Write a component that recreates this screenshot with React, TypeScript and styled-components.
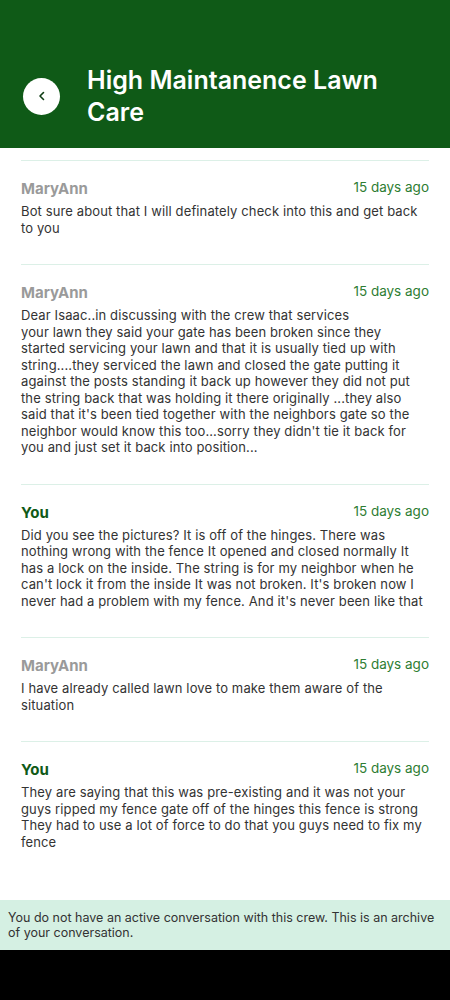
import React from "react";
import styled, { createGlobalStyle } from "styled-components";

interface Message {
  id: number;
  author: string;
  mine: boolean;
  time: string;
  text: string;
}

const messages: Message[] = [
  {
    id: 1,
    author: "MaryAnn",
    mine: false,
    time: "15 days ago",
    text: "Bot sure about that I will definately check into this and get back to you",
  },
  {
    id: 2,
    author: "MaryAnn",
    mine: false,
    time: "15 days ago",
    text: "Dear Isaac..in discussing with the crew that services\nyour lawn they said your gate has been broken since they started servicing your lawn and that it is usually tied up with string....they serviced the lawn and closed the gate putting it against the posts standing it back up however they did not put the string back that was holding it there originally ...they also said that it's been tied together with the neighbors gate so the neighbor would know this too...sorry they didn't tie it back for you and just set it back into position...",
  },
  {
    id: 3,
    author: "You",
    mine: true,
    time: "15 days ago",
    text: "Did you see the pictures? It is off of the hinges. There was nothing wrong with the fence It opened and closed normally It has a lock on the inside. The string is for my neighbor when he can't lock it from the inside It was not broken. It's broken now I never had a problem with my fence. And it's never been like that",
  },
  {
    id: 4,
    author: "MaryAnn",
    mine: false,
    time: "15 days ago",
    text: "I have already called lawn love to make them aware of the situation",
  },
  {
    id: 5,
    author: "You",
    mine: true,
    time: "15 days ago",
    text: "They are saying that this was pre-existing and it was not your guys ripped my fence gate off of the hinges this fence is strong They had to use a lot of force to do that you guys need to fix my fence",
  },
];

const GlobalStyle = createGlobalStyle`
  body {
    margin: 0;
    background: #ffffff;
    font-family: Inter, "Noto Sans", sans-serif;
  }
`;

const Page = styled.div`
  width: 450px;
  height: 1000px;
  display: flex;
  flex-direction: column;
  overflow: hidden;
`;

const Header = styled.header`
  height: 148px;
  box-sizing: border-box;
  padding: 44px 20px 0 23px;
  background: #0f5a17;
  display: flex;
  align-items: center;
  gap: 27px;
`;

const BackButton = styled.button`
  width: 37px;
  height: 37px;
  flex-shrink: 0;
  border-radius: 50%;
  border: none;
  background: #ffffff;
  display: flex;
  align-items: center;
  justify-content: center;
  padding: 0;
  cursor: pointer;
`;

const Title = styled.h1`
  margin: 0;
  color: #ffffff;
  font-size: 25px;
  font-weight: 600;
  line-height: 32px;
`;

const Feed = styled.div`
  flex: 1;
  padding: 12px 21px 0;
`;

const Item = styled.div`
  border-top: 1px solid #dcf0e7;
  padding: 18px 0 28px;
`;

const Meta = styled.div`
  display: flex;
  justify-content: space-between;
  align-items: flex-start;
`;

const Author = styled.span<{ $mine: boolean }>`
  font-size: 15px;
  line-height: 20px;
  font-weight: 700;
  color: ${(p) => (p.$mine ? "#0f5a17" : "#9a9a9a")};
`;

const Time = styled.span`
  font-size: 13.5px;
  line-height: 16px;
  color: #2e7d32;
`;

const Body = styled.p`
  margin: 4px 0 0;
  font-size: 13px;
  line-height: 16.5px;
  color: #333333;
  letter-spacing: 0.12px;
  white-space: pre-line;
`;

const Banner = styled.div`
  background: #d5f0e3;
  padding: 10px 6px 10px 8px;
  font-size: 12.5px;
  line-height: 15px;
  color: #333333;
`;

const NavBar = styled.div`
  height: 50px;
  flex-shrink: 0;
  background: #000000;
`;

export default function App() {
  return (
    <Page>
      <GlobalStyle />
      <Header>
        <BackButton aria-label="Back">
          <svg width="10" height="10" viewBox="0 0 10 10" fill="none">
            <path
              d="M6.5 1.5 L3 5 L6.5 8.5"
              stroke="#0f3d14"
              strokeWidth="1.6"
              strokeLinecap="round"
              strokeLinejoin="round"
            />
          </svg>
        </BackButton>
        <Title>High Maintanence Lawn Care</Title>
      </Header>
      <Feed>
        {messages.map((m) => (
          <Item key={m.id}>
            <Meta>
              <Author $mine={m.mine}>{m.author}</Author>
              <Time>{m.time}</Time>
            </Meta>
            <Body>{m.text}</Body>
          </Item>
        ))}
      </Feed>
      <Banner>
        You do not have an active conversation with this crew. This is an
        archive of your conversation.
      </Banner>
      <NavBar />
    </Page>
  );
}
